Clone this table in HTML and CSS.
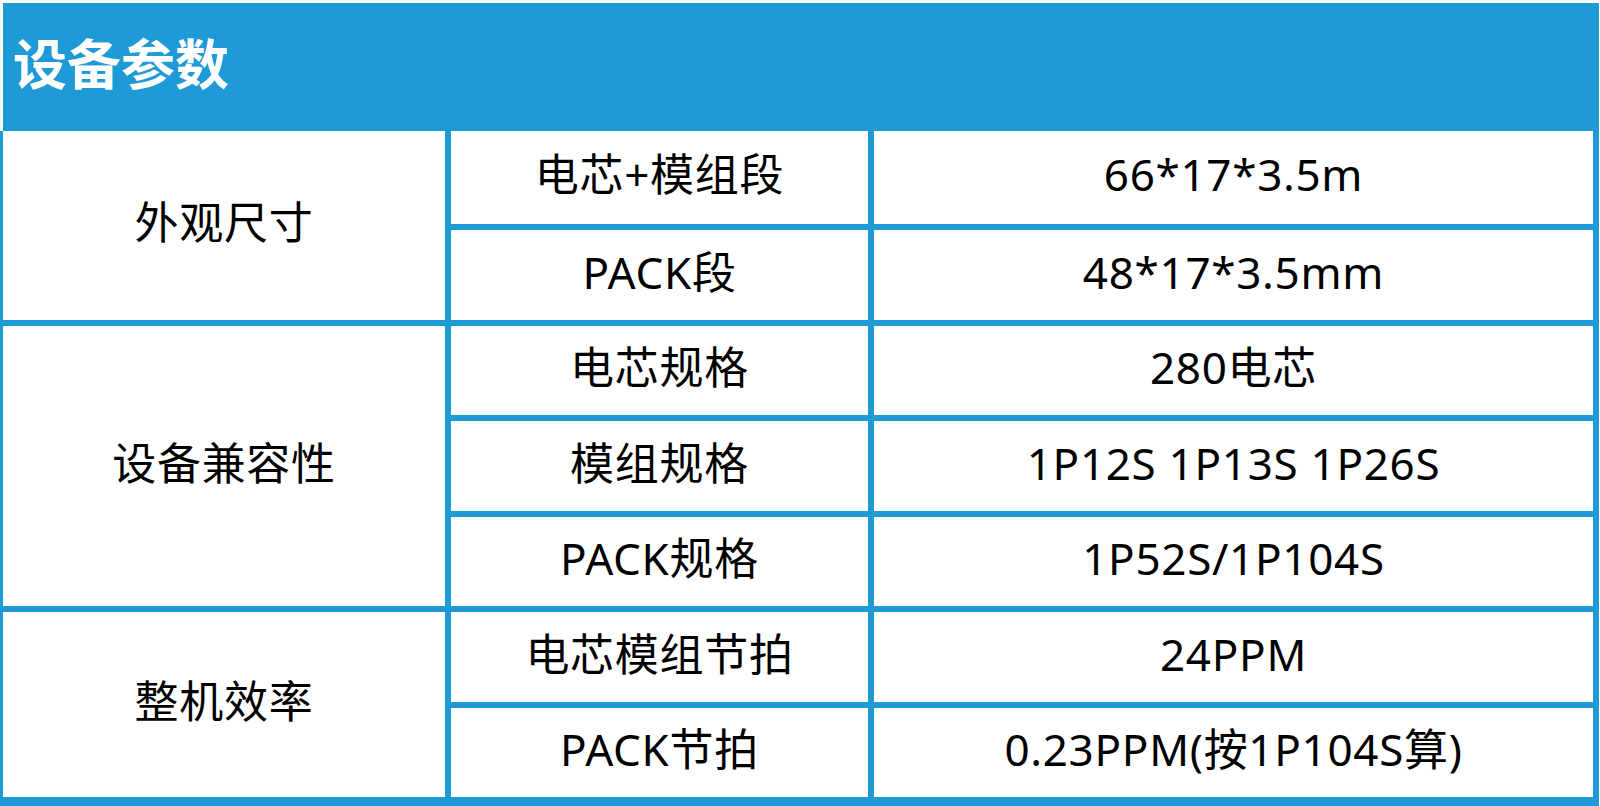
FILE: index.html
```html
<!DOCTYPE html>
<html lang="zh">
<head>
<meta charset="utf-8">
<title>设备参数</title>
<link rel="stylesheet" href="styles.css">
</head>
<body>
<div class="page">
  <div class="header"><span class="title">设备参数</span></div>
  <div class="grid">
    <div class="cell c1 r1-2">外观尺寸</div>
    <div class="cell">电芯+模组段</div>
    <div class="cell">66*17*3.5m</div>
    <div class="cell">PACK段</div>
    <div class="cell">48*17*3.5mm</div>

    <div class="cell c1 r3-5">设备兼容性</div>
    <div class="cell">电芯规格</div>
    <div class="cell">280电芯</div>
    <div class="cell">模组规格</div>
    <div class="cell">1P12S 1P13S 1P26S</div>
    <div class="cell">PACK规格</div>
    <div class="cell">1P52S/1P104S</div>

    <div class="cell c1 r6-7">整机效率</div>
    <div class="cell">电芯模组节拍</div>
    <div class="cell">24PPM</div>
    <div class="cell">PACK节拍</div>
    <div class="cell">0.23PPM(按1P104S算)</div>
  </div>
</div>
</body>
</html>
```

FILE: styles.css
```css
html, body {
  margin: 0;
  padding: 0;
  background: #ffffff;
  overflow: hidden;
}
.page {
  width: 1600px;
  height: 806px;
  overflow: hidden;
  font-family: "Noto Sans", "Noto Sans CJK SC", sans-serif;
}
.header {
  margin: 3px 1px 0 3px;
  height: 128px;
  background: #1e9ad6;
  display: flex;
  align-items: center;
  padding: 0 0 11px 10px;
  box-sizing: border-box;
}
.title {
  color: #ffffff;
  font-family: "Noto Sans CJK SC", sans-serif;
  font-weight: 700;
  font-size: 54px;
  line-height: 1;
}
.grid {
  margin-left: -3px;
  width: 1602px;
  box-sizing: border-box;
  background: #1e9ad6;
  padding: 0 6px 12px 6px;
  display: grid;
  grid-template-columns: 442px 417px 719px;
  grid-template-rows: 93px 90px 89px 90px 89px 90px 89px;
  gap: 6px;
}
.cell {
  background: #ffffff;
  display: flex;
  align-items: center;
  justify-content: center;
  padding-bottom: 7px;
  box-sizing: border-box;
  font-size: 44px;
  letter-spacing: 0.7px;
  color: #000000;
  line-height: 1;
  white-space: nowrap;
}
.c1 { grid-column: 1; }
.r1-2 { grid-row: 1 / span 2; }
.r3-5 { grid-row: 3 / span 3; }
.r6-7 { grid-row: 6 / span 2; }
```
